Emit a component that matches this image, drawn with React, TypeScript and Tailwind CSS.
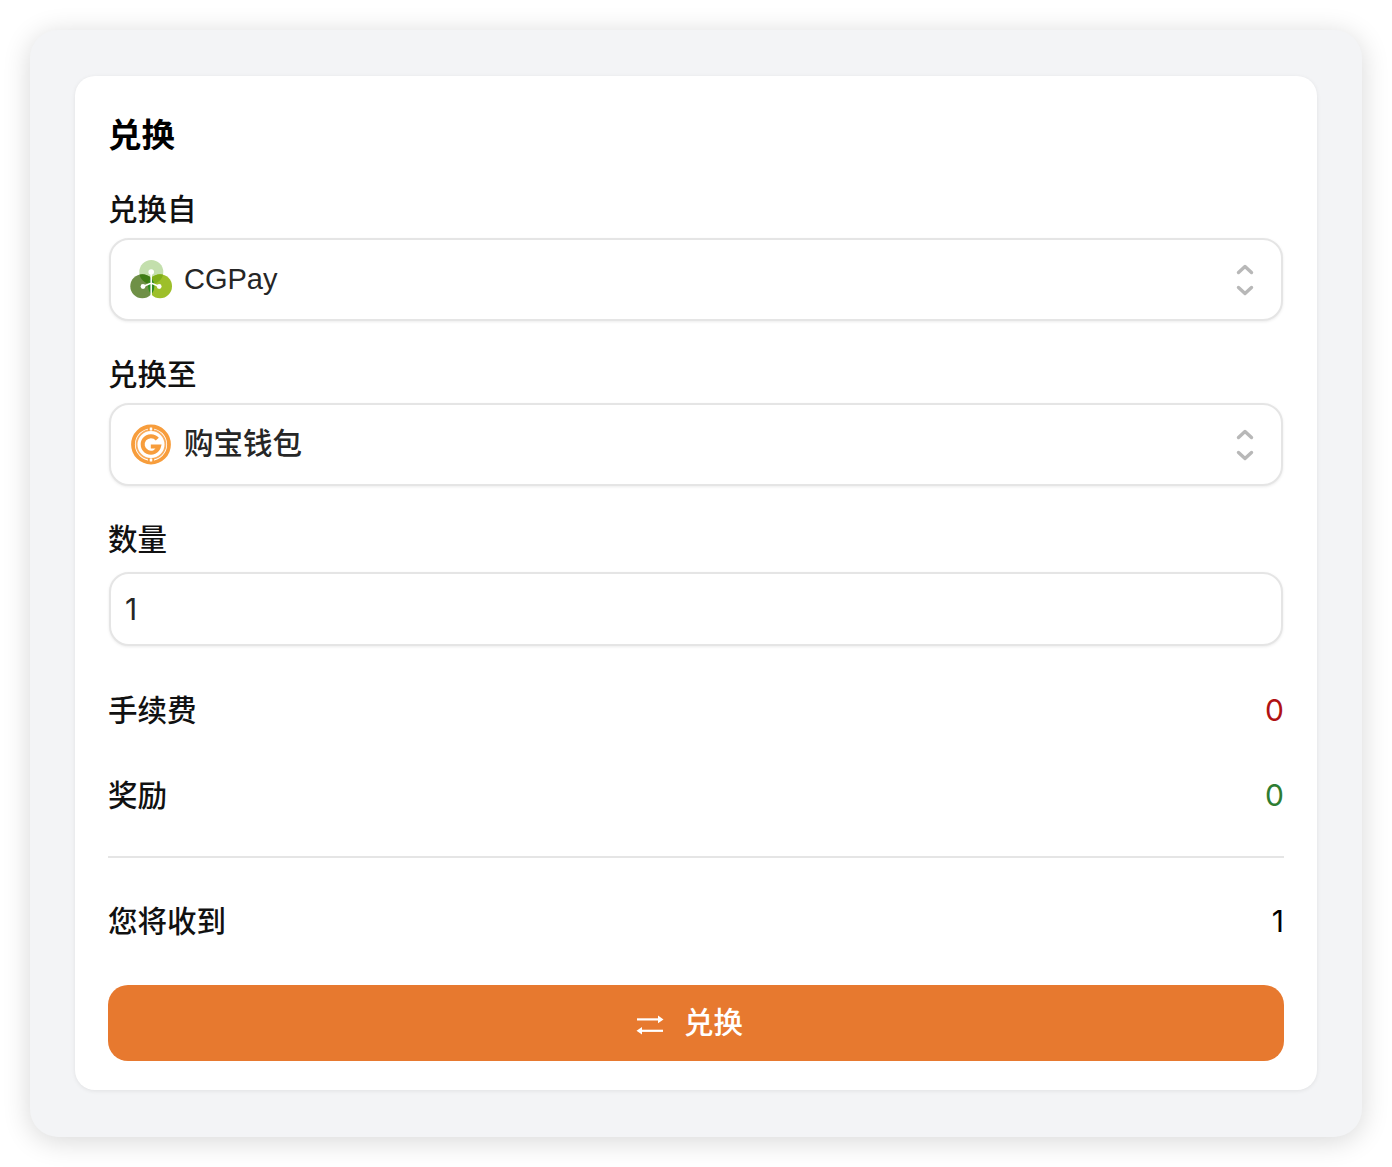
function Chevrons() {
  return (
    <svg width="20" height="34" viewBox="0 0 20 34" fill="none" stroke="#b8b8b8" strokeWidth="3.4" strokeLinecap="round" strokeLinejoin="round">
      <path d="M3.500 9.500 10 3.500l6.500 6" />
      <path d="M3.500 24.500l6.500 6 6.500-6" />
    </svg>
  );
}

function CgPayLogo() {
  return (
    <svg width="42" height="42" viewBox="0 0 42 42">
      <defs>
        <clipPath id="top"><circle cx="21.300" cy="13" r="12" /></clipPath>
        <clipPath id="left"><circle cx="12.300" cy="27.300" r="12" /></clipPath>
      </defs>
      <circle cx="21.300" cy="13" r="12" fill="#c3dfac" />
      <circle cx="12.300" cy="27.300" r="12" fill="#6f9047" />
      <circle cx="30" cy="27.300" r="12" fill="#9dbf2a" />
      <g clipPath="url(#top)">
        <circle cx="12.300" cy="27.300" r="12" fill="#3f7d14" />
        <circle cx="30" cy="27.300" r="12" fill="#7fae1b" />
      </g>
      <g clipPath="url(#left)">
        <circle cx="30" cy="27.300" r="12" fill="#2f8a22" />
      </g>
      <path d="M21.200 13v11M13 27.500l8.200-3.500 8 3.500M21.200 24v12" stroke="#fff" strokeWidth="1.500" fill="none" />
      <circle cx="21.200" cy="13" r="2.800" fill="#fff" />
      <circle cx="13" cy="27.500" r="2.400" fill="#fff" />
      <circle cx="29.200" cy="27.500" r="2.400" fill="#fff" />
    </svg>
  );
}

function CoinLogo() {
  return (
    <svg width="42" height="42" viewBox="0 0 42 42" fill="none">
      <circle cx="21" cy="20.500" r="18" stroke="#f79d3c" strokeWidth="3.800" />
      <circle cx="21" cy="20.500" r="14.400" stroke="#f9ad5e" strokeWidth="1.800" />
      <path d="M18 2h1.800v5h-1.800zM22.200 2H24v5h-1.800zM18 34h1.800v5h-1.800zM22.200 34H24v5h-1.800z" fill="#f79d3c" />
      <path d="M19.800 3.600h2.400v3h-2.400zM19.800 34.400h2.400v3h-2.400z" fill="#fff" />
      <path d="M27.300 15.100A8.300 8.300 0 1 0 29 22.500h-8.200" stroke="#f79d3c" strokeWidth="4" />
    </svg>
  );
}

function SelectBox({ logo, label, textSize }: { logo: React.ReactNode; label: string; textSize: string }) {
  return (
    <div className="mx-[1px] mt-[8px] flex h-[83px] items-center rounded-[20px] border-2 border-[#e5e5e5] bg-white pl-[19px] pr-[26px] shadow-[0_1px_3px_rgba(0,0,0,0.08)]">
      {logo}
      <span className={`ml-[12px] font-medium text-[#262626] ${textSize}`}>{label}</span>
      <span className="ml-auto flex"><Chevrons /></span>
    </div>
  );
}

function Row({ label, value, color, className }: { label: string; value: string; color: string; className: string }) {
  return (
    <div className={`flex items-center justify-between leading-[44px] ${className}`}>
      <span className="text-[29.500px] font-medium text-[#111]">{label}</span>
      <span className={`-translate-y-[1px] font-['Inter',sans-serif] text-[30px] ${color}`}>{value}</span>
    </div>
  );
}

export default function App() {
  return (
    <div className="h-[1167px] w-[1392px] bg-white pl-[30px] pr-[30px] pt-[30px] font-['Liberation_Sans','Noto_Sans_CJK_SC',sans-serif]">
      <div className="h-[1107px] rounded-[28px] bg-[#f3f4f6] pl-[45px] pr-[45px] pt-[46px] shadow-[0_4px_28px_rgba(0,0,0,0.16)]">
        <div className="h-[1014px] rounded-[20px] bg-white pl-[33px] pr-[33px] pt-[38px] shadow-[0_1px_4px_rgba(0,0,0,0.08)]">
          <h1 className="text-[33.500px] font-bold leading-[44px] text-black">兑换</h1>
          <div className="mt-[32px] text-[29.500px] font-medium leading-[40px] text-[#111]">兑换自</div>
          <SelectBox logo={<CgPayLogo />} label="CGPay" textSize="text-[29px]" />
          <div className="mt-[34px] text-[29.500px] font-medium leading-[40px] text-[#111]">兑换至</div>
          <SelectBox logo={<CoinLogo />} label="购宝钱包" textSize="text-[29.500px]" />
          <div className="mt-[34px] text-[29.500px] font-medium leading-[40px] text-[#111]">数量</div>
          <div className="mx-[1px] mt-[12px] flex h-[74px] items-center rounded-[20px] border-2 border-[#e5e5e5] bg-white pl-[14px] font-['Inter',sans-serif] text-[30px] text-[#262626] shadow-[0_1px_3px_rgba(0,0,0,0.08)]">
            1
          </div>
          <Row label="手续费" value="0" color="text-[#b01212]" className="mt-[43px]" />
          <Row label="奖励" value="0" color="text-[#2e7d32]" className="mt-[41px]" />
          <div className="mt-[38px] h-[2px] bg-[#e5e5e5]" />
          <Row label="您将收到" value="1" color="text-black" className="mt-[42px]" />
          <button className="mt-[41px] flex h-[76px] w-full items-center justify-center rounded-[20px] bg-[#e7792f] pr-[13px] text-[29.500px] font-medium text-white">
            <svg className="mr-[20px]" width="28" height="24" viewBox="0 0 28 24" fill="#fff">
              <path d="M1 7.300h22v2.200H1z" />
              <path d="M22 4.500l5.500 3.900L22 12.200z" />
              <path d="M5 18.700h22v2.200H5z" />
              <path d="M6 16 .5 19.800 6 23.500z" />
            </svg>
            兑换
          </button>
        </div>
      </div>
    </div>
  );
}
